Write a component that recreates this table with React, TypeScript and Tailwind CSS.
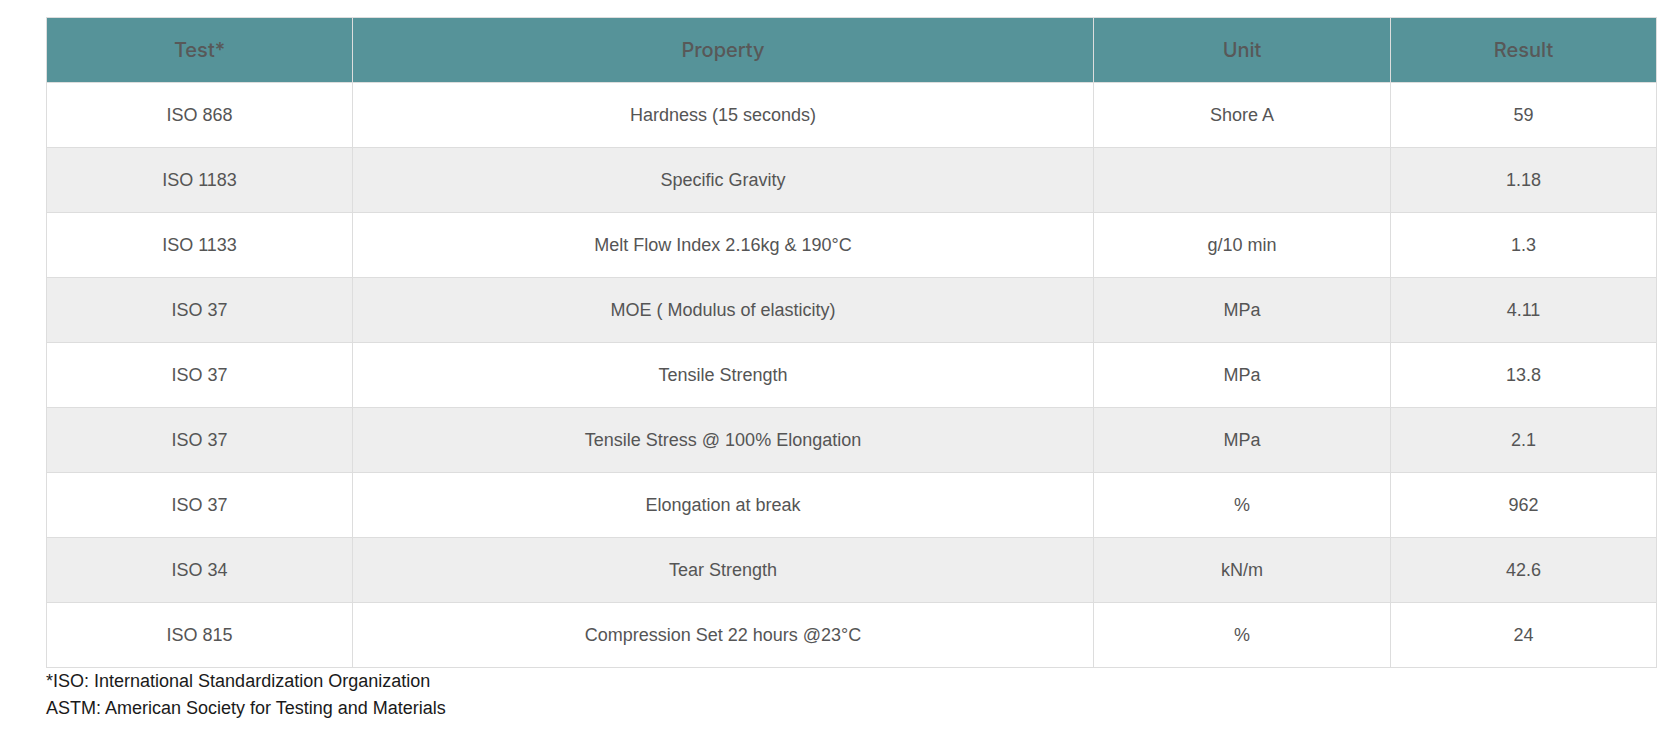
import React from "react";

const rows: [string, string, string, string][] = [
  ["ISO 868", "Hardness (15 seconds)", "Shore A", "59"],
  ["ISO 1183", "Specific Gravity", "", "1.18"],
  ["ISO 1133", "Melt Flow Index 2.16kg & 190°C", "g/10 min", "1.3"],
  ["ISO 37", "MOE ( Modulus of elasticity)", "MPa", "4.11"],
  ["ISO 37", "Tensile Strength", "MPa", "13.8"],
  ["ISO 37", "Tensile Stress @ 100% Elongation", "MPa", "2.1"],
  ["ISO 37", "Elongation at break", "%", "962"],
  ["ISO 34", "Tear Strength", "kN/m", "42.6"],
  ["ISO 815", "Compression Set 22 hours @23°C", "%", "24"],
];

export default function App() {
  return (
    <div className="bg-white w-full min-h-[743px] pt-[17px] pl-[46px]" style={{ fontFamily: '"Liberation Sans", Arial, sans-serif' }}>
      <table className="w-[1610px] border-collapse table-fixed">
        <colgroup>
          <col className="w-[306px]" />
          <col className="w-[741px]" />
          <col className="w-[297px]" />
          <col className="w-[266px]" />
        </colgroup>
        <thead>
          <tr className="h-[65px] bg-[#569399]">
            {["Test*", "Property", "Unit", "Result"].map((h) => (
              <th
                key={h}
                className="border border-[#dddddd] text-center text-[20px] font-medium text-[#585858] p-0"
                style={{ fontFamily: 'Inter, "Open Sans", sans-serif' }}
              >
                {h}
              </th>
            ))}
          </tr>
        </thead>
        <tbody>
          {rows.map((r, i) => (
            <tr key={i} className={`h-[65px] ${i % 2 === 1 ? "bg-[#eeeeee]" : "bg-white"}`}>
              {r.map((c, j) => (
                <td key={j} className="border border-[#dddddd] text-center text-[18px] text-[#555555] p-0">
                  {c}
                </td>
              ))}
            </tr>
          ))}
        </tbody>
      </table>
      <div className="text-[18px] leading-[27px] text-[#1a1a1a] pt-0">
        <p>*ISO: International Standardization Organization</p>
        <p>ASTM: American Society for Testing and Materials</p>
      </div>
    </div>
  );
}
